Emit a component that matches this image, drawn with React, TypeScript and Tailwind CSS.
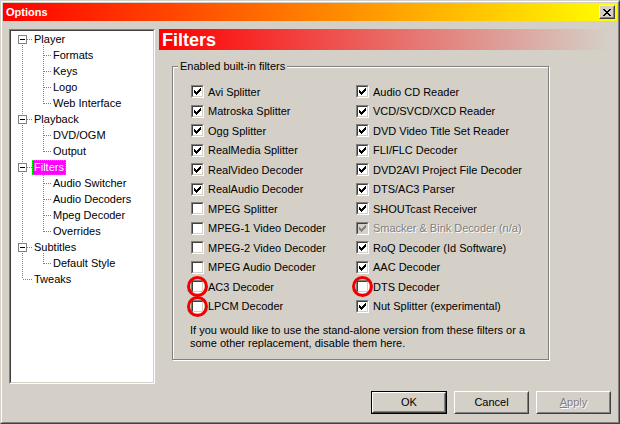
const FONT = "font-['Liberation_Sans',Arial,sans-serif]";

type TreeNode = { label: string; level: 0 | 1; box?: boolean; selected?: boolean };

const tree: TreeNode[] = [
  { label: "Player", level: 0, box: true },
  { label: "Formats", level: 1 },
  { label: "Keys", level: 1 },
  { label: "Logo", level: 1 },
  { label: "Web Interface", level: 1 },
  { label: "Playback", level: 0, box: true },
  { label: "DVD/OGM", level: 1 },
  { label: "Output", level: 1 },
  { label: "Filters", level: 0, box: true, selected: true },
  { label: "Audio Switcher", level: 1 },
  { label: "Audio Decoders", level: 1 },
  { label: "Mpeg Decoder", level: 1 },
  { label: "Overrides", level: 1 },
  { label: "Subtitles", level: 0, box: true },
  { label: "Default Style", level: 1 },
  { label: "Tweaks", level: 0 },
];

type Filter = { label: string; checked: boolean; disabled?: boolean; marked?: boolean };

const leftFilters: Filter[] = [
  { label: "Avi Splitter", checked: true },
  { label: "Matroska Splitter", checked: true },
  { label: "Ogg Splitter", checked: true },
  { label: "RealMedia Splitter", checked: true },
  { label: "RealVideo Decoder", checked: true },
  { label: "RealAudio Decoder", checked: true },
  { label: "MPEG Splitter", checked: false },
  { label: "MPEG-1 Video Decoder", checked: false },
  { label: "MPEG-2 Video Decoder", checked: false },
  { label: "MPEG Audio Decoder", checked: false },
  { label: "AC3 Decoder", checked: false, marked: true },
  { label: "LPCM Decoder", checked: false, marked: true },
];

const rightFilters: Filter[] = [
  { label: "Audio CD Reader", checked: true },
  { label: "VCD/SVCD/XCD Reader", checked: true },
  { label: "DVD Video Title Set Reader", checked: true },
  { label: "FLI/FLC Decoder", checked: true },
  { label: "DVD2AVI Project File Decoder", checked: true },
  { label: "DTS/AC3 Parser", checked: true },
  { label: "SHOUTcast Receiver", checked: true },
  { label: "Smacker & Bink Decoder (n/a)", checked: true, disabled: true },
  { label: "RoQ Decoder (Id Software)", checked: true },
  { label: "AAC Decoder", checked: true },
  { label: "DTS Decoder", checked: false, marked: true },
  { label: "Nut Splitter (experimental)", checked: true },
];

function TreeLines() {
  const lines: JSX.Element[] = [];
  const center = (i: number) => i * 16 + 8;
  const last = tree.length - 1;

  // root line
  lines.push(<line key="root" x1={11.5} y1={8} x2={11.5} y2={center(last)} />);

  tree.forEach((n, i) => {
    const c = center(i) + 0.5;
    if (n.level === 0) {
      lines.push(<line key={`h${i}`} x1={n.box ? 16 : 12} y1={c} x2={22} y2={c} />);
      // children vertical
      let j = i + 1;
      while (j < tree.length && tree[j].level === 1) j++;
      if (j - 1 > i) {
        lines.push(<line key={`v${i}`} x1={32.5} y1={center(i) + 6} x2={32.5} y2={center(j - 1) + 1} />);
      }
    } else {
      lines.push(<line key={`h${i}`} x1={33} y1={c} x2={41} y2={c} />);
    }
  });

  return (
    <svg className="absolute inset-0" width={142} height={351} shapeRendering="crispEdges">
      <g stroke="#808080" strokeWidth={1} strokeDasharray="1 1">
        {lines}
      </g>
      {tree.map((n, i) =>
        n.box ? (
          <g key={`b${i}`}>
            <rect x={7.5} y={center(i) - 3.5} width={8} height={8} fill="#fff" stroke="#808080" />
            <line x1={9} y1={center(i) + 0.5} x2={14} y2={center(i) + 0.5} stroke="#000" />
          </g>
        ) : null
      )}
    </svg>
  );
}

function TreePanel() {
  return (
    <div className="ml-[6px] mt-[8px] w-[146px] h-[355px] border border-t-[#808080] border-l-[#808080] border-r-white border-b-white">
      <div className="h-full border border-t-[#404040] border-l-[#404040] border-r-[#d4d0c8] border-b-[#d4d0c8] bg-white">
        <div className="relative h-full">
          <TreeLines />
          <div className="relative">
            {tree.map((n) => (
              <div key={n.label} className="h-[16px] flex items-center">
                <span
                  className={
                    (n.level === 0 ? "ml-[21px] " : "ml-[40px] ") +
                    (n.selected
                      ? "bg-[#ff00ff] text-white border border-dotted border-[#00ff00]"
                      : "text-black border border-transparent") +
                    " px-px h-[15px] leading-[13px] whitespace-nowrap text-[11px]"
                  }
                >
                  {n.label}
                </span>
              </div>
            ))}
          </div>
        </div>
      </div>
    </div>
  );
}

function CheckBox({ checked, disabled, marked }: { checked: boolean; disabled?: boolean; marked?: boolean }) {
  return (
    <span className="relative shrink-0 w-[13px] h-[13px] border border-t-[#808080] border-l-[#808080] border-r-white border-b-white">
      <span
        className={
          "block w-full h-full border border-t-[#404040] border-l-[#404040] border-r-[#d4d0c8] border-b-[#d4d0c8] " +
          (disabled ? "bg-[#d4d0c8]" : "bg-white")
        }
      >
        {checked && (
          <svg width={9} height={9} viewBox="0 0 9 9" shapeRendering="crispEdges" className="block">
            <path
              d="M1.5 3v3M2.5 4v3M3.5 5v3M4.5 4v3M5.5 3v3M6.5 2v3M7.5 1v3"
              stroke={disabled ? "#808080" : "#000"}
              strokeWidth={1}
            />
          </svg>
        )}
      </span>
      {marked && (
        <span className="absolute -left-[5px] -top-[5px] w-[21px] h-[21px] rounded-full border-[3px] border-[#f00000]" />
      )}
    </span>
  );
}

function FilterColumn({ items, width }: { items: Filter[]; width: string }) {
  return (
    <div className={width}>
      {items.map((f) => (
        <div key={f.label} className="h-[19.5px] flex items-center gap-[4px]">
          <CheckBox checked={f.checked} disabled={f.disabled} marked={f.marked} />
          <span
            className={
              "text-[11px] whitespace-nowrap " +
              (f.disabled ? "text-[#808080] [text-shadow:1px_1px_0_#fff]" : "text-black")
            }
          >
            {f.label}
          </span>
        </div>
      ))}
    </div>
  );
}

function Button({ children, isDefault, disabled }: { children: React.ReactNode; isDefault?: boolean; disabled?: boolean }) {
  const face = (
    <div className="h-full border border-t-white border-l-white border-r-[#404040] border-b-[#404040]">
      <div
        className={
          "h-full flex items-center justify-center text-[11px] border border-t-[#d4d0c8] border-l-[#d4d0c8] border-r-[#808080] border-b-[#808080] " +
          (disabled ? "text-[#808080] [text-shadow:1px_1px_0_#fff]" : "text-black")
        }
      >
        {children}
      </div>
    </div>
  );
  return isDefault ? (
    <div className="w-[76px] h-[23px] border border-black">{face}</div>
  ) : (
    <div className="w-[75px] h-[23px]">{face}</div>
  );
}

export default function App() {
  return (
    <div className={`w-[620px] h-[424px] bg-[#d4d0c8] border border-t-[#d4d0c8] border-l-[#d4d0c8] border-r-[#404040] border-b-[#404040] ${FONT}`}>
      <div className="h-full border border-t-white border-l-white border-r-[#808080] border-b-[#808080] p-px">
        {/* Title bar */}
        <div className="h-[18px] flex items-center justify-between bg-[linear-gradient(to_right,#ff0000,#ffff00)]">
          <span className="ml-[3px] text-white font-bold text-[11px]">Options</span>
          <div className="mr-[2px] w-[16px] h-[14px] border border-t-white border-l-white border-r-[#404040] border-b-[#404040] bg-[#d4d0c8]">
            <div className="h-full border border-t-[#d4d0c8] border-l-[#d4d0c8] border-r-[#808080] border-b-[#808080] flex items-center justify-center">
              <svg width={8} height={7} viewBox="0 0 8 7" shapeRendering="crispEdges">
                <path
                  d="M0 0h2v1H0zM6 0h2v1H6zM1 1h2v1H1zM5 1h2v1H5zM2 2h4v1H2zM3 3h2v1H3zM2 4h4v1H2zM1 5h2v1H1zM5 5h2v1H5zM0 6h2v1H0zM6 6h2v1H6z"
                  fill="#000"
                />
              </svg>
            </div>
          </div>
        </div>

        {/* Body */}
        <div className="flex">
          <TreePanel />

          <div className="ml-[4px] mt-[8px] w-[451px]">
            {/* Page header */}
            <div className="h-[21px] flex items-center pl-[3px] bg-[linear-gradient(to_right,#ff0000,#d4d0c8)]">
              <span className="text-white font-bold text-[18px] leading-none">Filters</span>
            </div>

            {/* Group box */}
            <div className="relative mt-[16px] ml-[13px] w-[377px] h-[294px] border border-[#808080] shadow-[inset_1px_1px_0_#fff,1px_1px_0_#fff]">
              <span className="absolute left-[5px] -top-[7px] px-[2px] bg-[#d4d0c8] text-[11px] leading-[13px] text-black">
                Enabled built-in filters
              </span>
              <div className="flex pt-[15px] pl-[18px]">
                <FilterColumn items={leftFilters} width="w-[165px]" />
                <FilterColumn items={rightFilters} width="flex-1" />
              </div>
              <p className="mt-[8px] pl-[17px] text-[11px] leading-[13px] text-black">
                If you would like to use the stand-alone version from these filters or a
                <br />
                some other replacement, disable them here.
              </p>
            </div>
          </div>
        </div>

        {/* Buttons */}
        <div className="flex justify-end gap-[7px] mt-[7px] pr-[6px]">
          <Button isDefault>OK</Button>
          <Button>Cancel</Button>
          <Button disabled>
            <span>
              <span className="underline">A</span>pply
            </span>
          </Button>
        </div>
      </div>
    </div>
  );
}
